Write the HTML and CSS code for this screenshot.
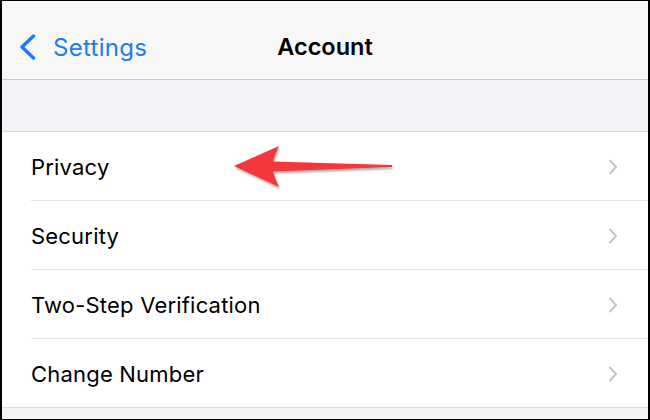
FILE: index.html
```html
<!DOCTYPE html>
<html>
<head>
<meta charset="utf-8">
<link rel="stylesheet" href="styles.css">
</head>
<body>
<div class="screen">
  <header class="nav">
    <div class="back">
      <svg class="back-chev" width="20" height="26" viewBox="0 0 20 26"><path d="M15.5 2 L4 13 L15.5 24" fill="none" stroke="#1b7cf4" stroke-width="3.4" stroke-linecap="round" stroke-linejoin="round"/></svg>
      <span class="back-label">Settings</span>
    </div>
    <div class="title">Account</div>
  </header>
  <div class="spacer"></div>
  <ul class="list">
    <li class="row">
      <span class="label">Privacy</span>
      <svg class="chev" width="10" height="16" viewBox="0 0 10 16"><path d="M2 1.5 L8 8 L2 14.5" fill="none" stroke="#c4c4c7" stroke-width="2" stroke-linecap="round" stroke-linejoin="round"/></svg>
      <svg class="arrow" width="170" height="50" viewBox="0 0 170 50"><defs><filter id="sh" x="-10%" y="-20%" width="130%" height="160%"><feDropShadow dx="1" dy="2" stdDeviation="1.2" flood-color="#000" flood-opacity="0.35"/></filter></defs><path d="M2 21 L47 1 Q43 9 41 16.5 L160 20 L160 22 L41 26.5 Q43 34 47 42 Z" fill="#f2383b" filter="url(#sh)"/></svg>
    </li>
    <li class="row">
      <span class="label">Security</span>
      <svg class="chev" width="10" height="16" viewBox="0 0 10 16"><path d="M2 1.5 L8 8 L2 14.5" fill="none" stroke="#c4c4c7" stroke-width="2" stroke-linecap="round" stroke-linejoin="round"/></svg>
    </li>
    <li class="row">
      <span class="label">Two-Step Verification</span>
      <svg class="chev" width="10" height="16" viewBox="0 0 10 16"><path d="M2 1.5 L8 8 L2 14.5" fill="none" stroke="#c4c4c7" stroke-width="2" stroke-linecap="round" stroke-linejoin="round"/></svg>
    </li>
    <li class="row">
      <span class="label">Change Number</span>
      <svg class="chev" width="10" height="16" viewBox="0 0 10 16"><path d="M2 1.5 L8 8 L2 14.5" fill="none" stroke="#c4c4c7" stroke-width="2" stroke-linecap="round" stroke-linejoin="round"/></svg>
    </li>
  </ul>
  <div class="footer"></div>
</div>
</body>
</html>
```
FILE: styles.css
```css
* { box-sizing: border-box; }
html, body { margin: 0; padding: 0; }
body { font-family: "Inter", "Liberation Sans", sans-serif; color: #000; }
.screen {
  width: 650px;
  height: 420px;
  border-style: solid;
  border-color: #000;
  border-width: 1px 2px 1px 2px;
  background: #f2f2f7;
  display: flex;
  flex-direction: column;
  overflow: hidden;
}
.nav {
  height: 79px;
  flex: none;
  background: #f7f7f7;
  border-bottom: 1px solid #c8c8cb;
  padding: 14px 0 0 16px;
  display: flex;
  align-items: center;
  position: relative;
}
.back { display: flex; align-items: center; gap: 15px; }
.back-label { font-size: 24px; color: #1b7cf4; letter-spacing: 0.3px; }
.title {
  position: absolute;
  left: 0; right: 0; top: 13px; bottom: 0;
  display: flex; align-items: center; justify-content: center;
  font-size: 23.5px; font-weight: 600; pointer-events: none;
}
.spacer { height: 52px; flex: none; border-bottom: 1px solid #d9d9dc; }
.list { list-style: none; margin: 0; padding: 0 0 0 29px; background: #fff; flex: none; border-bottom: 1px solid #dcdcdf; }
.row {
  height: 69px;
  display: flex;
  align-items: center;
  padding: 2px 30px 0 0;
  border-bottom: 1px solid #e2e2e4;
  position: relative;
}
.row:last-child { border-bottom: none; height: 68px; }
.label { flex: 1; font-size: 22px; letter-spacing: 0.2px; }
.chev { flex: none; }
.arrow { position: absolute; left: 201px; top: 13px; }
.footer { flex: 1; }
```
